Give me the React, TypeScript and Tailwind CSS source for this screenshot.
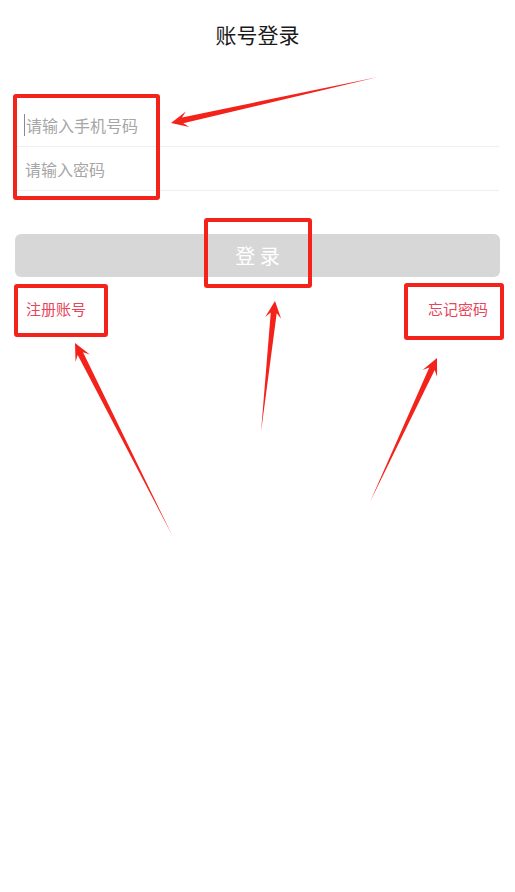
import React from "react";

type Pt = [number, number];

// tapered arrow: thin at the tail, widening to a swept-back head
function arrowPoints(tail: Pt, tip: Pt, headLen: number, headW: number, neckW: number) {
  const dx = tip[0] - tail[0];
  const dy = tip[1] - tail[1];
  const len = Math.hypot(dx, dy);
  const ux = dx / len;
  const uy = dy / len;
  const nx = -uy;
  const ny = ux;
  const neck: Pt = [tip[0] - ux * headLen * 0.7, tip[1] - uy * headLen * 0.7];
  const barb: Pt = [tip[0] - ux * headLen, tip[1] - uy * headLen];
  const pts: Pt[] = [
    tail,
    [neck[0] + (nx * neckW) / 2, neck[1] + (ny * neckW) / 2],
    [barb[0] + (nx * headW) / 2, barb[1] + (ny * headW) / 2],
    tip,
    [barb[0] - (nx * headW) / 2, barb[1] - (ny * headW) / 2],
    [neck[0] - (nx * neckW) / 2, neck[1] - (ny * neckW) / 2],
  ];
  return pts.map((p) => p.join(",")).join(" ");
}

const arrows: { tail: Pt; tip: Pt }[] = [
  { tail: [378, 77], tip: [171, 123] },
  { tail: [261, 432], tip: [275, 301] },
  { tail: [172, 535], tip: [75, 343] },
  { tail: [370, 502], tip: [437, 358] },
];

function App() {
  return (
    <div
      className="relative w-[515px] h-[892px] overflow-hidden bg-white"
      style={{ fontFamily: '"Noto Sans CJK SC", "Noto Sans", sans-serif' }}
    >
      <div className="flex h-[70px] items-center justify-center text-[21px] text-[#1a1a1a]">
        账号登录
      </div>

      <div className="mt-[33px] px-[16px]">
        <div className="flex h-[44px] items-center border-b border-[#efefef] pl-[8px] text-[16px] text-[#a6a6a6]">
          <span className="mr-[1px] h-[22px] w-[1px] bg-[#8a8a8a]" />
          请输入手机号码
        </div>
        <div className="flex h-[44px] items-center border-b border-[#efefef] pl-[9px] text-[16px] text-[#a6a6a6]">
          请输入密码
        </div>
      </div>

      <div className="mx-[15px] mt-[43px] flex h-[43px] items-center justify-center rounded-[6px] bg-[#d8d7d8] text-[20px] text-white">
        登 录
      </div>

      <div className="mt-[21px] flex h-[22px] items-center justify-between px-[26px] pr-[27px] text-[15px] text-[#e6455a]">
        <span>注册账号</span>
        <span>忘记密码</span>
      </div>

      {/* annotation boxes */}
      <div className="absolute left-[13px] top-[94px] h-[106px] w-[147px] rounded-[3px] border-[4px] border-[#f3231b]" />
      <div className="absolute left-[204px] top-[218px] h-[70px] w-[108px] rounded-[3px] border-[4px] border-[#f3231b]" />
      <div className="absolute left-[14px] top-[284px] h-[53px] w-[94px] rounded-[3px] border-[4px] border-[#f3231b]" />
      <div className="absolute left-[404px] top-[283px] h-[57px] w-[100px] rounded-[3px] border-[4px] border-[#f3231b]" />

      <svg className="absolute left-0 top-0" width="515" height="892">
        {arrows.map((a, i) => (
          <polygon key={i} points={arrowPoints(a.tail, a.tip, 17, 16, 6)} fill="#f3231b" />
        ))}
      </svg>
    </div>
  );
}

export default App;
